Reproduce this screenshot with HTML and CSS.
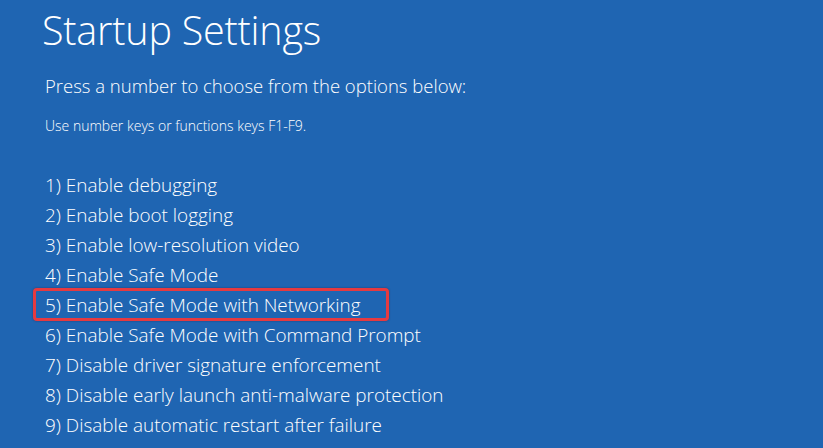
FILE: index.html
```html
<!DOCTYPE html>
<html>
<head>
<meta charset="utf-8">
<title>Startup Settings</title>
<link rel="stylesheet" href="styles.css">
</head>
<body>
<div class="screen">
  <h1 class="title">Startup Settings</h1>
  <p class="prompt">Press a number to choose from the options below:</p>
  <p class="hint">Use number keys or functions keys F1-F9.</p>
  <ol class="options">
    <li>1) Enable debugging</li>
    <li>2) Enable boot logging</li>
    <li>3) Enable low-resolution video</li>
    <li>4) Enable Safe Mode</li>
    <li class="marked">5) Enable Safe Mode with Networking</li>
    <li>6) Enable Safe Mode with Command Prompt</li>
    <li>7) Disable driver signature enforcement</li>
    <li>8) Disable early launch anti-malware protection</li>
    <li>9) Disable automatic restart after failure</li>
  </ol>
</div>
</body>
</html>
```

FILE: styles.css
```css
html, body {
  margin: 0;
  padding: 0;
  background-color: #1f65b2;
}

body {
  width: 823px;
  height: 448px;
  overflow: hidden;
  font-family: "Open Sans", "Noto Sans", sans-serif;
  color: #ffffff;
}

.screen {
  padding: 0 0 0 45px;
}

.title {
  margin: 0 0 0 -3px;
  padding-top: 3px;
  font-size: 39.5px;
  font-weight: 300;
  line-height: 54px;
  letter-spacing: -0.2px;
}

.prompt {
  margin: 16px 0 0;
  font-size: 18.5px;
  font-weight: 300;
  line-height: 26px;
}

.hint {
  margin: 18px 0 0;
  font-size: 14px;
  font-weight: 300;
  line-height: 18px;
}

.options {
  list-style: none;
  margin: 35px 0 0;
  padding: 0;
}

.options li {
  font-size: 18.9px;
  font-weight: 300;
  line-height: 30px;
  height: 30px;
}

.options li.marked {
  position: relative;
}

.options li.marked::before {
  content: "";
  position: absolute;
  left: -12px;
  top: -2px;
  width: 350px;
  height: 27px;
  border: 3px solid #e63a40;
  border-radius: 4px;
  box-shadow: 0 0 2px rgba(40, 20, 40, 0.5);
}
```
